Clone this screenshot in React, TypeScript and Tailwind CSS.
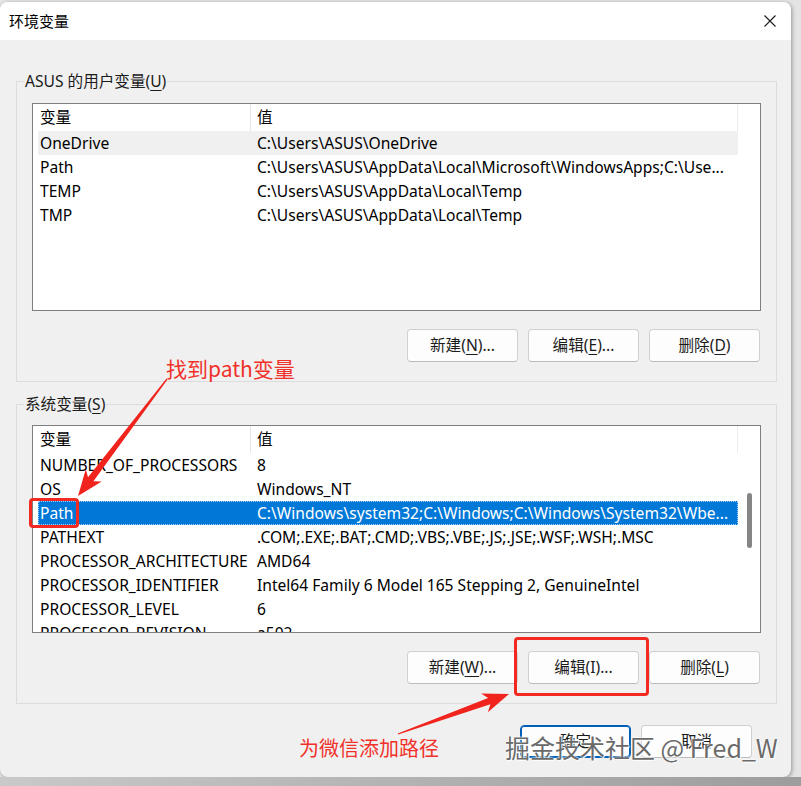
import React from "react";

const FONT = "[font-family:'Noto_Sans','Noto_Sans_CJK_SC',sans-serif]";
const CJK = "[font-family:'Noto_Sans_CJK_SC','Noto_Sans',sans-serif]";

type Row = { name: string; value: string; state?: "hover" | "selected" };

const userRows: Row[] = [
  { name: "OneDrive", value: "C:\\Users\\ASUS\\OneDrive", state: "hover" },
  { name: "Path", value: "C:\\Users\\ASUS\\AppData\\Local\\Microsoft\\WindowsApps;C:\\Use..." },
  { name: "TEMP", value: "C:\\Users\\ASUS\\AppData\\Local\\Temp" },
  { name: "TMP", value: "C:\\Users\\ASUS\\AppData\\Local\\Temp" },
];

const sysRows: Row[] = [
  { name: "NUMBER_OF_PROCESSORS", value: "8" },
  { name: "OS", value: "Windows_NT" },
  { name: "Path", value: "C:\\Windows\\system32;C:\\Windows;C:\\Windows\\System32\\Wbe...", state: "selected" },
  { name: "PATHEXT", value: ".COM;.EXE;.BAT;.CMD;.VBS;.VBE;.JS;.JSE;.WSF;.WSH;.MSC" },
  { name: "PROCESSOR_ARCHITECTURE", value: "AMD64" },
  { name: "PROCESSOR_IDENTIFIER", value: "Intel64 Family 6 Model 165 Stepping 2, GenuineIntel" },
  { name: "PROCESSOR_LEVEL", value: "6" },
  { name: "PROCESSOR_REVISION", value: "a502" },
];

function Mn({ label, k, rest }: { label: string; k: string; rest?: string }) {
  return (
    <span>
      {label}(<span className="underline underline-offset-[3px]">{k}</span>){rest}
    </span>
  );
}

function Button({ children, primary }: { children: React.ReactNode; primary?: boolean }) {
  return (
    <div
      className={
        "flex h-[33px] w-[111px] items-center justify-center rounded-[4px] border bg-[#fdfdfd] text-[15.6px] text-[#1b1b1b] " +
        (primary ? "border-[#005fb8] shadow-[inset_0_0_0_1px_#005fb8]" : "border-[#d0d0d0] border-b-[#bcbcbc]")
      }
    >
      {children}
    </div>
  );
}

function ListView({ rows, scrollbar }: { rows: Row[]; scrollbar?: boolean }) {
  return (
    <div className="flex h-[208px] w-full overflow-hidden border border-[#7f7f7f] bg-white text-[15.6px] text-black">
      <div className="flex min-w-0 flex-1 flex-col">
        <div className="flex h-[27px] shrink-0 items-center">
          <div className="h-full w-[217px] pl-[7px] leading-[27px]">变量</div>
          <div className="h-full w-px bg-[#e5e5e5]" />
          <div className="flex-1 pl-[6px] leading-[27px]">值</div>
          <div className="h-full w-px bg-[#ececec]" />
        </div>
        <div className="flex flex-col pl-[5px]">
          {rows.map((r) => (
            <div
              key={r.name}
              className={
                "flex h-[24px] shrink-0 items-center leading-[24px] " +
                (r.state === "selected"
                  ? "bg-[#0078d7] text-white outline-1 -outline-offset-1 outline-dotted outline-[#a9d1f5]"
                  : r.state === "hover"
                  ? "bg-[#f0f0f0]"
                  : "")
              }
            >
              <div className="w-[212px] shrink-0 overflow-hidden whitespace-nowrap pl-[2px]">{r.name}</div>
              <div className="min-w-0 flex-1 overflow-hidden whitespace-nowrap pl-[7px]">{r.value}</div>
            </div>
          ))}
        </div>
      </div>
      <div className="w-[22px] shrink-0 pl-[9px] pt-[67px]">
        {scrollbar && <div className="h-[55px] w-[5px] rounded-full bg-[#858585]" />}
      </div>
    </div>
  );
}

function Group({
  legend,
  rows,
  scrollbar,
  buttons,
  pt,
}: {
  legend: React.ReactNode;
  rows: Row[];
  scrollbar?: boolean;
  buttons: React.ReactNode;
  pt: string;
}) {
  return (
    <fieldset className="w-full border border-[#dcdcdc] p-0">
      <legend className="ml-[7px] px-[1px] text-[15.6px] leading-[20px] text-[#1b1b1b]">{legend}</legend>
      <div className={"flex flex-col px-[15px] pb-[19px] " + pt}>
        <ListView rows={rows} scrollbar={scrollbar} />
        <div className="mt-[18px] flex justify-end gap-[10px] pr-[1px]">{buttons}</div>
      </div>
    </fieldset>
  );
}

function arrowPoints(x1: number, y1: number, x2: number, y2: number) {
  const headLen = 26;
  const headW = 10;
  const neckW = 3.4;
  const tailW = 0.6;
  const dx = x2 - x1;
  const dy = y2 - y1;
  const L = Math.hypot(dx, dy);
  const ux = dx / L;
  const uy = dy / L;
  const nx = -uy;
  const ny = ux;
  const bx = x2 - ux * headLen;
  const by = y2 - uy * headLen;
  const nbx = x2 - ux * (headLen - 5);
  const nby = y2 - uy * (headLen - 5);
  const pts: [number, number][] = [
    [x1 + nx * tailW, y1 + ny * tailW],
    [nbx + nx * neckW, nby + ny * neckW],
    [bx + nx * headW, by + ny * headW],
    [x2, y2],
    [bx - nx * headW, by - ny * headW],
    [nbx - nx * neckW, nby - ny * neckW],
    [x1 - nx * tailW, y1 - ny * tailW],
  ];
  return pts.map((p) => p[0].toFixed(1) + "," + p[1].toFixed(1)).join(" ");
}

export default function App() {
  return (
    <div className={"relative h-[786px] w-[801px] overflow-hidden bg-[#e4e4e4] pt-[2px] " + FONT}>
      <div className="flex h-[775px] w-[791px] flex-col overflow-hidden rounded-[8px] bg-[#f0f0f0] shadow-[1px_1px_4px_rgba(0,0,0,0.35)]">
        {/* title bar */}
        <div className="flex h-[38px] shrink-0 items-center justify-between bg-white pl-[9px] pr-[14px]">
          <span className={"text-[15px] text-black " + CJK}>环境变量</span>
          <svg width="12" height="12" viewBox="0 0 12 12" className="mr-[1px]">
            <path d="M0.5 0.5 L11.5 11.5 M11.5 0.5 L0.5 11.5" stroke="#1b1b1b" strokeWidth="1.1" />
          </svg>
        </div>

        {/* body */}
        <div className="flex flex-col pl-[16px] pr-[14px] pt-[31px]">
          <Group
            legend={<Mn label="ASUS 的用户变量" k="U" />}
            rows={userRows}
            pt="pt-[12px]"
            buttons={
              <>
                <Button><Mn label="新建" k="N" rest="..." /></Button>
                <Button><Mn label="编辑" k="E" rest="..." /></Button>
                <Button><Mn label="删除" k="D" /></Button>
              </>
            }
          />
          <div className="mt-[12px]">
            <Group
              legend={<Mn label="系统变量" k="S" />}
              rows={sysRows}
              scrollbar
              pt="pt-[11px]"
              buttons={
                <>
                  <Button><Mn label="新建" k="W" rest="..." /></Button>
                  <Button>编辑(I)...</Button>
                  <Button><Mn label="删除" k="L" /></Button>
                </>
              }
            />
          </div>
          <div className="mt-[21px] flex justify-end gap-[10px] pr-[25px]">
            <Button primary>确定</Button>
            <Button>取消</Button>
          </div>
        </div>
      </div>

      {/* bottom strip */}
      <div className="absolute bottom-0 left-0 h-[9px] w-full bg-gradient-to-r from-[#c9c9c9] to-[#9d9d9d]" />

      {/* annotations */}
      <div className={"absolute left-[166px] top-[354px] text-[21px] leading-[28px] text-[#f0312a] " + CJK}>找到path变量</div>
      <div className={"absolute left-[299px] top-[734px] text-[20px] leading-[28px] text-[#f0312a] " + CJK}>为微信添加路径</div>
      <div className="absolute left-[29px] top-[498px] h-[30px] w-[50px] rounded-[4px] border-[3px] border-[#f22a22]" />
      <div className="absolute left-[514px] top-[637px] h-[59px] w-[135px] rounded-[4px] border-[3px] border-[#f22a22]" />
      <svg className="absolute left-0 top-0" width="801" height="786" viewBox="0 0 801 786">
        <polygon points={arrowPoints(167, 379, 78, 496)} fill="#f0241c" />
        <polygon points={arrowPoints(398, 734, 509, 694)} fill="#f0241c" />
      </svg>

      {/* watermark */}
      <div
        className={
          "absolute left-[505px] top-[731px] whitespace-nowrap text-[25px] leading-[32px] text-[#6a6a6a] [text-shadow:0_0_2px_#fff,0_0_2px_#fff,1px_1px_1px_#fff] " +
          CJK
        }
      >
        掘金技术社区 @ Fred_W
      </div>
    </div>
  );
}
